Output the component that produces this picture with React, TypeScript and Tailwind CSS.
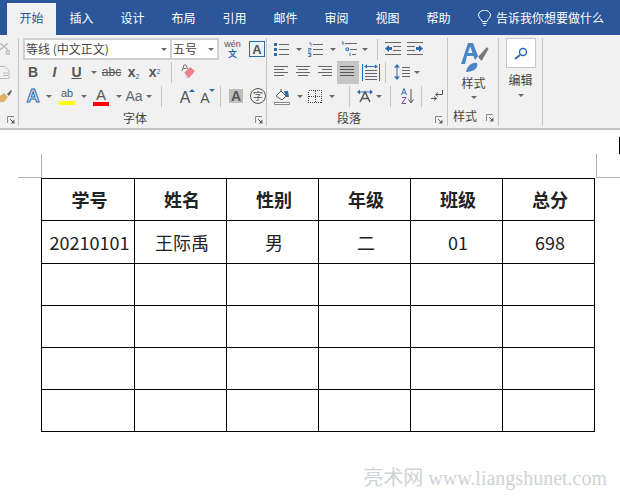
import React from "react";

const cjk = "font-['Noto_Sans_CJK_SC','Noto_Sans',sans-serif]";
const latin = "font-['Liberation_Sans',sans-serif]";

const tabs = ["插入", "设计", "布局", "引用", "邮件", "审阅", "视图", "帮助"];
const headers = ["学号", "姓名", "性别", "年级", "班级", "总分"];
const values = ["20210101", "王际禹", "男", "二", "01", "698"];

function Arrow() {
  return (
    <svg width="6" height="3" viewBox="0 0 6 3">
      <path d="M0 0h6L3 3z" fill="#666" />
    </svg>
  );
}

function Launcher() {
  return (
    <svg width="8" height="8" viewBox="0 0 8 8" fill="none" className="mt-[4px]">
      <path d="M.5 7V.5H7" stroke="#888" />
      <path d="M3 3l3 3" stroke="#666" />
      <path d="M7.5 3.5v4h-4z" fill="#666" />
    </svg>
  );
}

function Sep() {
  return <div className="w-px h-[21px] bg-[#c6c6c6]" />;
}

function Slot({ w, children }: { w: string; children?: React.ReactNode }) {
  return <div className={`${w} h-full flex items-center justify-center shrink-0`}>{children}</div>;
}

function Lines({ rows, kind }: { rows: number[][]; kind?: string }) {
  return (
    <svg width="16" height="14" viewBox="0 0 16 14" stroke={kind || "#666"}>
      {rows.map((r, i) => (
        <path key={i} d={`M${r[0]} ${r[2] + 0.5}H${r[1]}`} />
      ))}
    </svg>
  );
}

function BulletList() {
  return (
    <svg width="16" height="15" viewBox="0 0 16 15">
      <path d="M0 1h3v3H0zM0 6h3v3H0zM0 11h3v3H0z" fill="#2b6cb0" />
      <path d="M5 2.5h10M5 7.5h10M5 12.5h10" stroke="#666" />
    </svg>
  );
}

function NumberList() {
  return (
    <svg width="16" height="15" viewBox="0 0 16 15">
      <path d="M1 1h2v3M0 6.5h3V8H0v2h3M0 11.5h3v3H0M1 13h2" stroke="#2b6cb0" fill="none" strokeWidth=".8" />
      <path d="M5 2.5h10M5 7.5h10M5 12.5h10" stroke="#666" />
    </svg>
  );
}

function MultiList() {
  return (
    <svg width="17" height="16" viewBox="0 0 17 16">
      <path d="M1 1h1v3M5 7h2.500v2.500H5zM9 12v3" stroke="#2b6cb0" fill="none" />
      <path d="M4 2.500h12M9 8.500h7M11 13.500h4" stroke="#666" />
    </svg>
  );
}

function Indent({ flip }: { flip?: boolean }) {
  return (
    <svg width="16" height="14" viewBox="0 0 16 14" className={flip ? "-scale-x-100" : ""}>
      <path d="M0 .5h16M8 4.500h8M8 8.500h8M0 12.500h16" stroke="#666" />
      <path d="M0 6.500l4-3.500v2h3v3H4v2z" fill="#2b6cb0" />
    </svg>
  );
}

function Distributed() {
  return (
    <svg width="18" height="17" viewBox="0 0 18 17">
      <path d="M.5 0v17M17.500 0v17" stroke="#2b6cb0" />
      <path d="M3 6.500h12M3 9.500h12M3 12.500h12M3 15.500h12" stroke="#666" />
      <path d="M2 2.500l3-2v4zM16 2.500l-3-2v4zM5 2h8v1H5z" fill="#2b6cb0" />
    </svg>
  );
}

function LineSpacing() {
  return (
    <svg width="16" height="16" viewBox="0 0 16 16">
      <path d="M3 0l3 3.500H3.500v9H6L3 16 0 12.500h2.500v-9H0z" fill="#2b6cb0" />
      <path d="M8 3.500h8M8 6.500h8M8 9.500h8M8 12.500h8" stroke="#666" />
    </svg>
  );
}

function Bucket() {
  return (
    <svg width="17" height="17" viewBox="0 0 17 17" fill="none">
      <path d="M2 8l5-5 5 5-4 4z" stroke="#555" fill="#fff" />
      <path d="M7 1v3" stroke="#555" />
      <path d="M10 3h4l1 6h-3z" fill="#2b6cb0" />
      <path d="M.5 14.500h15v2H.5z" stroke="#888" fill="#fff" />
    </svg>
  );
}

function Borders() {
  return (
    <svg width="14" height="13" viewBox="0 0 14 13" stroke="#444" strokeDasharray="1 1" fill="none" shapeRendering="crispEdges">
      <path d="M.5 .500h13v12H.5zM7.500 .500v12M.5 6.500h13" />
    </svg>
  );
}

function TextDir() {
  return (
    <svg width="16" height="14" viewBox="0 0 16 14" fill="none">
      <path d="M3 13L8 3l5 10M5 9.500h6" stroke="#555" strokeWidth="1.500" />
      <path d="M0 3l3-2.500v5zM16 3l-3-2.500v5z" fill="#2b6cb0" />
      <path d="M3 3h10" stroke="#2b6cb0" />
    </svg>
  );
}

function Sort() {
  return (
    <svg width="13" height="16" viewBox="0 0 13 16" fill="none">
      <path d="M.5 7L3 .5 5.500 7M1.500 5h3" stroke="#2b6cb0" />
      <path d="M1 9.500h4L1 15.500h4" stroke="#7b4bab" />
      <path d="M10 1v13M7.500 11.500L10 15l2.500-3.500" stroke="#555" />
    </svg>
  );
}

function Mark() {
  return (
    <svg width="12" height="12" viewBox="0 0 12 12" fill="none" stroke="#555">
      <path d="M11.500 0v4.500H5M7 2.500l-2.500 2 2.500 2" />
      <path d="M0 8.500h5M3 6.500l2.500 2L3 10.500" />
    </svg>
  );
}

function Eraser() {
  return (
    <svg width="15" height="16" viewBox="0 0 15 16" fill="none">
      <path d="M3 9l6-6 5 4-6 7-3-1z" fill="#ee8090" />
      <path d="M3 9l3 4" stroke="#fff" />
      <path d="M1 7l2-6 2 0 1.500 4M2 4.500h3" stroke="#777" />
    </svg>
  );
}

function Letter({
  cls,
  children,
}: {
  cls: string;
  children: React.ReactNode;
}) {
  return <span className={`${latin} leading-none ${cls}`}>{children}</span>;
}

function FontGroup() {
  return (
    <div className="w-[248px] h-[88px] border-r border-[#c6c6c6] pl-1 shrink-0 flex flex-col">
      <div className="h-[22px] flex items-center">
        <div className="w-[149px] h-[22px] bg-white border-2 border-[#d0d0d0] flex items-center justify-between pl-[1px] pr-[3px]">
          <span className={`${cjk} text-[12px] text-[#444] leading-none whitespace-nowrap`}>等线 (中文正文)</span>
          <Arrow />
        </div>
        <div className="w-[47px] h-[22px] bg-white border-2 border-l-0 border-[#d0d0d0] flex items-center justify-between pl-[1px] pr-[3px]">
          <span className={`${cjk} text-[12px] text-[#444] leading-none whitespace-nowrap`}>五号</span>
          <Arrow />
        </div>
        <div className="w-[27px] flex flex-col items-center">
          <span className={`${latin} text-[9px] leading-[9px] text-[#555]`}>wén</span>
          <span className={`${cjk} text-[9px] leading-[10px] text-[#2b6cb0] font-bold`}>文</span>
        </div>
        <div className="ml-[3px] w-[16px] h-[16px] border border-[#2b6cb0] flex items-center justify-center">
          <Letter cls="text-[13px] font-bold text-[#555]">A</Letter>
        </div>
      </div>
      <div className="h-6 flex items-center">
        <Slot w="w-[20px]"><Letter cls="text-[14px] font-bold text-[#555]">B</Letter></Slot>
        <Slot w="w-[23px]"><Letter cls="text-[14px] italic font-bold text-[#555]">I</Letter></Slot>
        <Slot w="w-[21px]"><Letter cls="text-[14px] font-bold underline text-[#555]">U</Letter></Slot>
        <Slot w="w-[13px]"><Arrow /></Slot>
        <Slot w="w-[23px]"><Letter cls="text-[12px] line-through text-[#555]">abc</Letter></Slot>
        <Slot w="w-[21px]"><Letter cls="text-[14px] font-bold text-[#555]">x<sub className="text-[7px] text-[#2b6cb0] font-normal">2</sub></Letter></Slot>
        <Slot w="w-[21px]"><Letter cls="text-[14px] font-bold text-[#555]">x<sup className="text-[7px] text-[#2b6cb0] font-normal">2</sup></Letter></Slot>
        <Slot w="w-[6px]" />
        <Sep />
        <Slot w="w-[32px]"><Eraser /></Slot>
      </div>
      <div className="h-6 flex items-center">
        <Slot w="w-[20px]"><Letter cls="text-[18px] font-bold text-[#dbe7f5] [-webkit-text-stroke:1px_#2b6cb0]">A</Letter></Slot>
        <Slot w="w-[11px]"><Arrow /></Slot>
        <Slot w="w-[26px]">
          <div className="flex flex-col items-center">
            <Letter cls="text-[11px] text-[#555]">ab</Letter>
            <div className="w-4 h-1 mt-[2px] bg-[#ffff00]" />
          </div>
        </Slot>
        <Slot w="w-[7px]"><Arrow /></Slot>
        <Slot w="w-[28px]">
          <div className="flex flex-col items-center">
            <Letter cls="text-[15px] text-[#555]">A</Letter>
            <div className="w-4 h-1 bg-[#ff0000]" />
          </div>
        </Slot>
        <Slot w="w-[7px]"><Arrow /></Slot>
        <Slot w="w-[24px]"><Letter cls="text-[14px] text-[#666]">Aa</Letter></Slot>
        <Slot w="w-[6px]"><Arrow /></Slot>
        <Slot w="w-[9px]" />
        <Sep />
        <Slot w="w-[16px]" />
        <div className="relative w-[14px] h-full flex items-center justify-center shrink-0">
          <Letter cls="text-[16px] text-[#555] mt-[3px]">A</Letter>
          <div className="absolute right-[-3px] top-[5px] border-x-[3px] border-b-[3px] border-x-transparent border-b-[#2b6cb0]" />
        </div>
        <Slot w="w-[7px]" />
        <div className="relative w-[12px] h-full flex items-center justify-center shrink-0">
          <Letter cls="text-[14px] text-[#555] mt-[3px]">A</Letter>
          <div className="absolute right-[-4px] top-[5px] border-x-[3px] border-t-[3px] border-x-transparent border-t-[#2b6cb0]" />
        </div>
        <Slot w="w-[9px]" />
        <Sep />
        <Slot w="w-[8px]" />
        <div className="w-[14px] h-[14px] bg-[#bdbdbd] flex items-center justify-center shrink-0">
          <Letter cls="text-[14px] font-bold text-[#555]">A</Letter>
        </div>
        <Slot w="w-[7px]" />
        <div className="w-[16px] h-[16px] rounded-full border border-[#555] flex items-center justify-center shrink-0">
          <span className={`${cjk} text-[10px] leading-none text-[#555]`}>字</span>
        </div>
      </div>
      <div className="flex-1 flex items-center justify-between pl-[100px] pr-[3px] pt-[2px]">
        <span className={`${cjk} text-[12px] leading-none text-[#444]`}>字体</span>
        <Launcher />
      </div>
    </div>
  );
}

function ParagraphGroup() {
  const alignLeft = [[0, 14, 1], [0, 10, 4], [0, 14, 7], [0, 10, 10]];
  const alignCenter = [[0, 14, 1], [2, 12, 4], [0, 14, 7], [2, 12, 10]];
  const alignRight = [[0, 14, 1], [4, 14, 4], [0, 14, 7], [4, 14, 10]];
  const justify = [[0, 14, 1], [0, 14, 4], [0, 14, 7], [0, 14, 10]];
  return (
    <div className="w-[181px] h-[88px] border-r border-[#c6c6c6] pl-[7px] shrink-0 flex flex-col">
      <div className="h-[22px] flex items-center">
        <Slot w="w-[16px]"><BulletList /></Slot>
        <Slot w="w-[18px]"><Arrow /></Slot>
        <Slot w="w-[16px]"><NumberList /></Slot>
        <Slot w="w-[17px]"><Arrow /></Slot>
        <Slot w="w-[17px]"><MultiList /></Slot>
        <Slot w="w-[13px]"><Arrow /></Slot>
        <Slot w="w-[6px]" />
        <Sep />
        <Slot w="w-[7px]" />
        <Slot w="w-[16px]"><Indent /></Slot>
        <Slot w="w-[6px]" />
        <Slot w="w-[16px]"><Indent flip /></Slot>
      </div>
      <div className="h-6 flex items-center">
        <Slot w="w-[16px]"><Lines rows={alignLeft} /></Slot>
        <Slot w="w-[6px]" />
        <Slot w="w-[16px]"><Lines rows={alignCenter} /></Slot>
        <Slot w="w-[6px]" />
        <Slot w="w-[16px]"><Lines rows={alignRight} /></Slot>
        <Slot w="w-[3px]" />
        <div className="w-[22px] h-[23px] bg-[#c6c6c6] flex items-center justify-center shrink-0">
          <Lines rows={justify} kind="#555" />
        </div>
        <Slot w="w-[3px]" />
        <Slot w="w-[18px]"><Distributed /></Slot>
        <Slot w="w-[5px]" />
        <Sep />
        <Slot w="w-[8px]" />
        <Slot w="w-[16px]"><LineSpacing /></Slot>
        <Slot w="w-[13px]"><Arrow /></Slot>
      </div>
      <div className="h-6 flex items-center">
        <Slot w="w-[17px]"><Bucket /></Slot>
        <Slot w="w-[17px]"><Arrow /></Slot>
        <Slot w="w-[14px]"><Borders /></Slot>
        <Slot w="w-[20px]"><Arrow /></Slot>
        <Slot w="w-[7px]" />
        <Sep />
        <Slot w="w-[7px]" />
        <Slot w="w-[16px]"><TextDir /></Slot>
        <Slot w="w-[11px]"><Arrow /></Slot>
        <Slot w="w-[6px]" />
        <Sep />
        <Slot w="w-[10px]" />
        <Slot w="w-[13px]"><Sort /></Slot>
        <Slot w="w-[7px]" />
        <Sep />
        <Slot w="w-[9px]" />
        <Slot w="w-[12px]"><Mark /></Slot>
      </div>
      <div className="flex-1 flex items-center justify-between pl-[63px] pr-[4px] pt-[2px]">
        <span className={`${cjk} text-[12px] leading-none text-[#444]`}>段落</span>
        <Launcher />
      </div>
    </div>
  );
}

function StylesGroup() {
  return (
    <div className="w-[51px] h-[88px] border-r border-[#c6c6c6] shrink-0 flex flex-col">
      <div className="h-[66px] flex flex-col items-center">
        <svg width="28" height="30" viewBox="0 0 28 30" className="mt-[5px] ml-[3px]">
          <path fillRule="evenodd" d="M0 21L7 0h5l5 13-3 4-1.500-4H6l-2 8zM7 10h4.500L9.300 3.500z" fill="#4a86c5" />
          <path d="M17 14l9-10 1.500 2-7 12z" fill="#777" />
          <path d="M5 29c1-6 6-10 11-9 2 5-4 9-11 9z" fill="#4a86c5" />
        </svg>
        <span className={`${cjk} text-[12px] leading-none text-[#444] mt-[4px] ml-[1px]`}>样式</span>
        <div className="mt-[7px] ml-[1px] flex"><Arrow /></div>
      </div>
      <div className="flex-1 flex items-center justify-between pl-[5px] pr-[4px] pt-[2px]">
        <span className={`${cjk} text-[12px] leading-none text-[#444]`}>样式</span>
        <Launcher />
      </div>
    </div>
  );
}

function EditGroup() {
  return (
    <div className="w-[44px] h-[88px] border-r border-[#c6c6c6] shrink-0 flex flex-col items-center">
      <div className="w-[30px] h-[30px] bg-white border border-[#c6c6c6] flex items-center justify-center">
        <svg width="14" height="13" viewBox="0 0 14 13" fill="none" stroke="#2b6cb0">
          <circle cx="9" cy="5" r="3.500" strokeWidth="1.500" />
          <path d="M6 8l-5 4" strokeWidth="2" />
        </svg>
      </div>
      <span className={`${cjk} text-[12px] leading-none text-[#444] mt-[6px]`}>编辑</span>
      <div className="mt-[8px] flex"><Arrow /></div>
    </div>
  );
}

function ClipboardGroup() {
  return (
    <div className="w-[19px] h-[88px] border-r border-[#c6c6c6] shrink-0 flex flex-col overflow-hidden">
      <div className="h-[22px] flex items-center">
        <svg width="10" height="12" viewBox="0 0 10 12" fill="none" stroke="#bbb" strokeWidth="1.500">
          <path d="M0 0l8 7M8 0L0 7" />
          <circle cx="8" cy="9.500" r="1.800" />
        </svg>
      </div>
      <div className="h-6 flex items-center">
        <svg width="10" height="13" viewBox="0 0 10 13" fill="none" stroke="#bbb">
          <path d="M0 .5h5l4 4v8H0M3 7h5M3 9.500h5" />
        </svg>
      </div>
      <div className="h-6 flex items-center">
        <svg width="12" height="14" viewBox="0 0 12 14">
          <path d="M0 7l4-3 4 4-4 5H0z" fill="#e0b060" />
          <path d="M7 5l4-4 1 1-3 5z" fill="#666" />
        </svg>
      </div>
      <div className="flex-1 flex items-center pl-[7px] pt-[2px]">
        <Launcher />
      </div>
    </div>
  );
}

function DocTable() {
  return (
    <table className={`${cjk} ml-[41px] w-[554px] table-fixed border-collapse text-[#222]`}>
      <colgroup>
        <col className="w-[93px]" />
      </colgroup>
      <tbody>
        <tr className="h-[42px]">
          {headers.map((h) => (
            <td key={h} className="border border-black text-center text-[18px] font-bold pl-[3px] pb-[1px] leading-none">{h}</td>
          ))}
        </tr>
        <tr className="h-[43px]">
          {values.map((v) => (
            <td key={v} className="border border-black text-center text-[18px] pl-[3px] pb-[1px] leading-none">{v}</td>
          ))}
        </tr>
        {[0, 1, 2, 3].map((r) => (
          <tr key={r} className="h-[42px]">
            {headers.map((h) => (
              <td key={h} className="border border-black p-0" />
            ))}
          </tr>
        ))}
      </tbody>
    </table>
  );
}

export default function App() {
  return (
    <div className="w-[620px] h-[500px] bg-white overflow-hidden flex flex-col">
      <div className={`${cjk} h-[35px] bg-[#2b579a] pl-[7px] pt-[3px] flex text-[12px] text-white shrink-0`}>
        <div className="w-[49px] h-[32px] bg-[#f1f1f1] text-[#2b579a] flex items-center justify-center pb-[3px]">开始</div>
        {tabs.map((t) => (
          <div key={t} className="w-[51px] h-[32px] flex items-center justify-center pb-[3px]">{t}</div>
        ))}
        <div className="ml-[14px] h-[32px] flex items-center gap-[5px] whitespace-nowrap pb-[3px]">
          <svg width="13" height="16" viewBox="0 0 13 16" fill="none" stroke="#fff">
            <path d="M4 11.500C3.500 9 .5 8 .5 5a6 4.800 0 0 1 12 0c0 3-3 4-3.500 6.500zM4.500 13.500h4M5.500 15.500h2" />
          </svg>
          告诉我你想要做什么
        </div>
      </div>
      <div className="h-[95px] bg-[#f1f1f1] border-b-2 border-[#c6c6c6] pt-[3px] flex shrink-0">
        <ClipboardGroup />
        <FontGroup />
        <ParagraphGroup />
        <StylesGroup />
        <EditGroup />
      </div>
      <div className="relative flex-1">
        <div className="absolute left-[41px] top-[24px] w-px h-6 bg-[#b4b4b4]" />
        <div className="absolute left-[18px] top-[47px] w-[23px] h-px bg-[#b4b4b4]" />
        <div className="absolute left-[596px] top-[24px] w-px h-6 bg-[#b4b4b4]" />
        <div className="absolute left-[596px] top-[47px] w-6 h-px bg-[#b4b4b4]" />
        <div className="absolute left-[619px] top-[7px] w-px h-[17px] bg-black" />
        <div className="pt-[48px]">
          <DocTable />
        </div>
        <div className="mt-[35px] pr-[13px] text-right text-[20px] leading-[22px] text-[#cfd2d6] whitespace-nowrap font-['Liberation_Serif','Noto_Sans_CJK_SC',serif]">
          亮术网 www.liangshunet.com
        </div>
      </div>
    </div>
  );
}
